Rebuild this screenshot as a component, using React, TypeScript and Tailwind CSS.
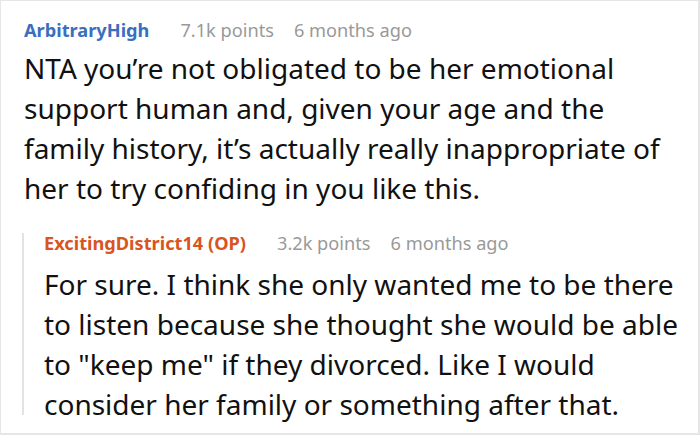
const font = { fontFamily: '"Noto Sans", "Open Sans", sans-serif' };

const Meta = ({ name, nameColor, points, age }: { name: string; nameColor: string; points: string; age: string }) => (
  <div className="flex items-baseline text-[18.2px] leading-[26px] whitespace-nowrap">
    <span className={`font-bold ${nameColor}`}>{name}</span>
    <span className="ml-[31px] text-[#999999]">{points}</span>
    <span className="ml-[20px] text-[#999999]">{age}</span>
  </div>
);

// each line kept on its own row so wrapping matches the shot
const Lines = ({ lines }: { lines: string[] }) => (
  <div className="text-[28px] leading-[40px] text-[#111111] whitespace-nowrap">
    {lines.map((l, i) => (
      <div key={i}>{l}</div>
    ))}
  </div>
);

export default function App() {
  return (
    <div className="w-[700px] h-[436px] bg-white" style={font}>
      <div className="w-[700px] h-[435px] border-2 border-[#e6e6e6] border-l border-t pl-[23px] pt-[16px]">
        <Meta name="ArbitraryHigh" nameColor="text-[#3a6fbf]" points="7.1k points" age="6 months ago" />
        <div className="mt-[5px]">
          <Lines
            lines={[
              "NTA you’re not obligated to be her emotional",
              "support human and, given your age and the",
              "family history, it’s actually really inappropriate of",
              "her to try confiding in you like this.",
            ]}
          />
        </div>
        <div className="flex -ml-[2px] mt-[22px]">
          <div className="w-[2px] h-[182px] mt-[3px] bg-[#e3e3e3] shrink-0" />
          <div className="pl-[20px]">
            <Meta name="ExcitingDistrict14 (OP)" nameColor="text-[#d9541e]" points="3.2k points" age="6 months ago" />
            <div className="mt-[8px]">
              <Lines
                lines={[
                  "For sure. I think she only wanted me to be there",
                  "to listen because she thought she would be able",
                  "to \"keep me\" if they divorced. Like I would",
                  "consider her family or something after that.",
                ]}
              />
            </div>
          </div>
        </div>
      </div>
    </div>
  );
}
